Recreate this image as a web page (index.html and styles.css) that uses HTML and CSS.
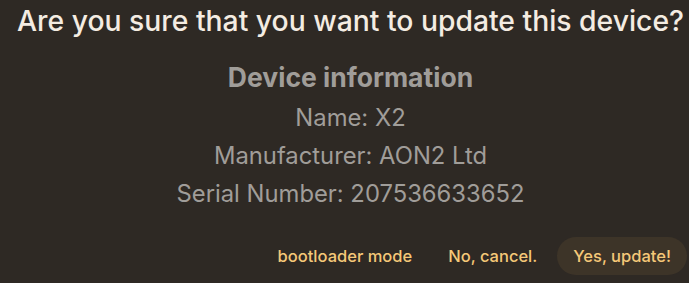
FILE: index.html
```html
<!DOCTYPE html>
<html>
<head>
<meta charset="utf-8">
<link rel="stylesheet" href="styles.css">
</head>
<body>
<div class="dialog">
  <h1 class="title">Are you sure that you want to update this device?</h1>
  <div class="info">
    <h2 class="info-title">Device information</h2>
    <p class="info-line">Name: X2</p>
    <p class="info-line">Manufacturer: AON2 Ltd</p>
    <p class="info-line">Serial Number: 207536633652</p>
  </div>
  <div class="actions">
    <button class="btn">bootloader mode</button>
    <button class="btn">No, cancel.</button>
    <button class="btn btn-primary">Yes, update!</button>
  </div>
</div>
</body>
</html>
```
FILE: styles.css
```css
html, body {
  margin: 0;
  padding: 0;
  background: #2e2924;
  height: 100%;
  overflow: hidden;
}
body {
  font-family: Inter, "Noto Sans", sans-serif;
}
.dialog {
  display: flex;
  flex-direction: column;
  padding: 3px 2px 0 14px;
}
.title {
  margin: 0;
  font-size: 28.3px;
  font-weight: 500;
  color: #f4ece2;
  text-align: center;
  line-height: 36px;
  white-space: nowrap;
}
.info {
  display: flex;
  flex-direction: column;
  align-items: center;
  margin-top: 22px;
  color: #a09d99;
}
.info-title {
  margin: 0 0 6px;
  font-size: 26.5px;
  font-weight: 700;
  line-height: 32px;
}
.info-line {
  margin: 0;
  font-size: 23.8px;
  line-height: 38px;
}
.actions {
  display: flex;
  justify-content: flex-end;
  align-items: center;
  gap: 4px;
  margin-top: 24px;
}
.btn {
  font-family: inherit;
  font-size: 16.5px;
  font-weight: 500;
  color: #f5c878;
  background: transparent;
  border: none;
  border-radius: 19px;
  height: 38px;
  padding: 0 16px;
}
.btn-primary {
  background: #3d3428;
}
```
